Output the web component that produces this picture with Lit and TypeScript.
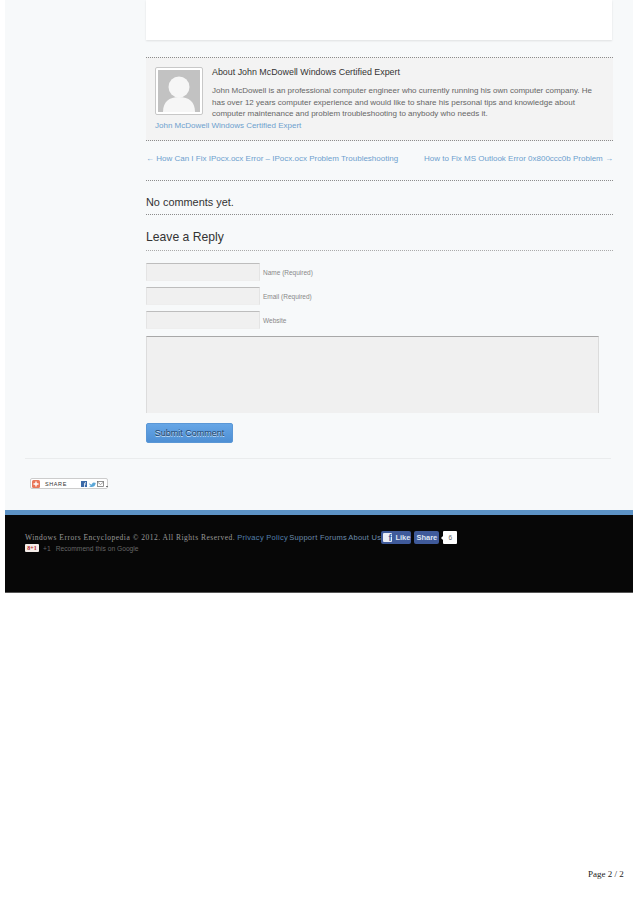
import { LitElement, html, css } from "lit";
import { customElement } from "lit/decorators.js";

@customElement("app-root")
export class AppRoot extends LitElement {
  static styles = css`
    :host { display: block; width: 638px; height: 903px; background: #fff; font-family: "Liberation Sans", Arial, sans-serif; position: relative; overflow: hidden; }
    a { color: #6d9fce; text-decoration: none; }
    .sheet { margin-left: 5px; width: 628px; height: 510px; background: #f7f9fa; box-sizing: border-box; display: flex; flex-direction: column; }
    .main { margin-left: 141px; width: 467px; display: flex; flex-direction: column; }
    .card { width: 466px; height: 40px; background: #fff; box-shadow: 0 1px 2px rgba(0,0,0,.1); }
    .about { margin-top: 17px; height: 84px; box-sizing: border-box; background: #f3f3f3; border-top: 1px dotted #8c8c8c; border-bottom: 1px dotted #8c8c8c; padding: 9px 9px 0; }
    .about-row { display: flex; }
    .avatar { width: 48px; height: 48px; box-sizing: border-box; flex: none; background: #fff; border: 1px solid #c8c8c8; border-radius: 2px; padding: 2px; display: block; }
    .avatar svg { display: block; width: 42px; height: 42px; }
    .about-text { margin-left: 9px; }
    .about h4 { margin: 0 0 7px; font-weight: 400; font-size: 8.9px; line-height: 11px; color: #333; }
    .about p { margin: 0; font-size: 8px; line-height: 11.6px; color: #666; width: 385px; }
    .author { display: block; font-size: 8px; line-height: 11px; }
    .nav { height: 40px; display: flex; justify-content: space-between; align-items: center; font-size: 8px; border-bottom: 1px dotted #8c8c8c; box-sizing: border-box; white-space: nowrap; padding-bottom: 4px; }
    .none { margin: 0; height: 34px; box-sizing: border-box; border-bottom: 1px dotted #8c8c8c; font-size: 10.9px; font-weight: 400; color: #333; padding-top: 15px; line-height: 13px; }
    .reply { margin: 0; height: 36px; box-sizing: border-box; border-bottom: 1px dotted #aaa; font-size: 12.2px; font-weight: 400; color: #333; padding-top: 15px; line-height: 15px; }
    .fields { display: flex; flex-direction: column; gap: 6px; margin-top: 12px; }
    .field { display: flex; align-items: center; height: 18px; }
    .input { width: 114px; height: 18px; box-sizing: border-box; background: #f0f0f0; border-top: 1px solid #bdbdbd; border-left: 1px solid #e4e4e4; border-right: 1px solid #e4e4e4; border-bottom: 1px solid #eee; }
    .field span { margin-left: 3px; font-size: 6.5px; color: #888; }
    .area { margin-top: 7px; width: 453px; height: 77px; box-sizing: border-box; background: #f0f0f0; border-top: 1px solid #a8a8a8; border-left: 1px solid #dcdcdc; border-right: 1px solid #dcdcdc; }
    .submit { display: block; margin-top: 10px; width: 87px; height: 20px; box-sizing: border-box; background: linear-gradient(#66a6e6, #4e8fd4); border: 1px solid #5a97d6; border-radius: 2px; color: #24446a; font: 400 9px/18px "Liberation Sans", Arial, sans-serif; padding: 0; text-shadow: 0 1px 0 #cfe3f7; }
    .rule { margin: 15px 0 0 20px; width: 586px; height: 1px; background: #eaeced; }
    .share { margin: 19px 0 0 25px; width: 78px; height: 11px; box-sizing: border-box; background: #fff; border: 1px solid #ccc; border-radius: 2px; display: flex; align-items: center; padding-left: 1px; font-size: 5.5px; letter-spacing: .6px; color: #333; }
    .share svg { display: block; flex: none; }
    .share b { font-weight: 400; margin-left: 5px; width: 31px; flex: none; }
    .footer { margin-left: 5px; width: 628px; height: 83px; box-sizing: border-box; background: #070707; border-top: 5px solid #5d93c6; border-bottom: 1px solid #555; padding: 16px 20px 0; }
    .f1 { display: flex; align-items: center; height: 13px; font: 7.5px/13px "Liberation Serif", serif; letter-spacing: .5px; color: #999; white-space: nowrap; }
    .f1 a { font-family: "Liberation Sans", sans-serif; letter-spacing: .3px; margin-left: 2px; color: #5480ae; font-size: 7.5px; }
    .f1 a + a { color: #6d8caa; margin-left: 1px; }
    .fb { height: 13px; background: #3f5a9a; border-radius: 2px; color: #dfe5f2; font: 700 7.5px/13px "Liberation Sans", sans-serif; letter-spacing: 0; display: flex; align-items: center; box-sizing: border-box; }
    .like { width: 30px; padding-left: 2px; }
    .like i { width: 9px; height: 9px; background: #e9edf5; color: #3f5a9a; border-radius: 1px; font: 700 9px/11px "Liberation Sans", sans-serif; text-align: right; margin-right: 3px; overflow: hidden; padding-right: 1px; box-sizing: border-box; }
    .sharebtn { width: 25px; justify-content: center; margin-left: 3px; }
    .count { margin-left: 4px; width: 14px; height: 13px; background: #fff; border-radius: 1px; color: #666; font: 6.5px/13px "Liberation Sans", sans-serif; text-align: center; letter-spacing: 0; position: relative; }
    .count::before { content: ""; position: absolute; left: -2px; top: 5px; border: 2px solid transparent; border-left: 0; border-right-color: #fff; }
    .f2 { display: flex; align-items: center; height: 8px; font-size: 6.7px; color: #666; }
    .g { width: 14px; height: 8px; background: #f4ece8; border-radius: 1px; color: #b3261e; font: 700 6px/8px "Liberation Serif", serif; text-align: center; margin-right: 4px; }
    .f2 span { margin-right: 5px; }
    .page { position: absolute; left: 588px; top: 869px; font: 9px/11px "Liberation Serif", serif; color: #222; }
  `;

  render() {
    return html`
      <div class="sheet">
        <div class="main">
          <div class="card"></div>
          <div class="about">
            <div class="about-row">
              <div class="avatar">
                <svg viewBox="0 0 42 42">
                  <rect width="42" height="42" fill="#c2c2c2"/>
                  <circle cx="21" cy="17" r="10.5" fill="#f6f6f6"/>
                  <path d="M5 42c0-10 6-15 16-15s16 5 16 15z" fill="#f6f6f6"/>
                </svg>
              </div>
              <div class="about-text">
                <h4>About John McDowell Windows Certified Expert</h4>
                <p>John McDowell is an professional computer engineer who currently running his own computer company. He has over 12 years computer experience and would like to share his personal tips and knowledge about computer maintenance and problem troubleshooting to anybody who needs it.</p>
              </div>
            </div>
            <a class="author" href="#">John McDowell Windows Certified Expert</a>
          </div>
          <div class="nav">
            <a href="#">← How Can I Fix IPocx.ocx Error – IPocx.ocx Problem Troubleshooting</a>
            <a href="#">How to Fix MS Outlook Error 0x800ccc0b Problem →</a>
          </div>
          <h3 class="none">No comments yet.</h3>
          <h3 class="reply">Leave a Reply</h3>
          <div class="fields">
            <div class="field"><div class="input"></div><span>Name (Required)</span></div>
            <div class="field"><div class="input"></div><span>Email (Required)</span></div>
            <div class="field"><div class="input"></div><span>Website</span></div>
          </div>
          <div class="area"></div>
          <button class="submit">Submit Comment</button>
        </div>
        <div class="rule"></div>
        <div class="share">
          <svg width="8" height="8" viewBox="0 0 8 8"><rect width="8" height="8" rx="1.5" fill="#e8775a"/><path d="M4 1.5v5M1.5 4h5" stroke="#fff" stroke-width="1.4"/></svg>
          <b>SHARE</b>
          <svg width="36" height="8" viewBox="0 0 36 8">
            <rect x="5" y="1" width="6" height="6" fill="#3b6aa8"/><path d="M8.500 7V4h1.500M8.500 4c0-1 .5-1.500 1.500-1.500" stroke="#fff" fill="none" stroke-width=".8"/>
            <path d="M13 3c1 1 2 1.500 3 1.500 0-1.500 1.500-2.500 3-1.500l1-.3-.5 1c0 2-2 3.300-4 3.300-1 0-2-.3-2.500-.8 1 0 1.500-.2 2-.5-1 0-1.500-.7-2-3z" fill="#5aa7d8"/>
            <rect x="21.500" y="1.500" width="6" height="5" fill="#fff" stroke="#666" stroke-width=".7"/><path d="M21.500 2l3 2.500 3-2.500" stroke="#666" fill="none" stroke-width=".6"/>
            <path d="M30 6.500h2" stroke="#555" stroke-width=".8"/>
          </svg>
        </div>
      </div>
      <div class="footer">
        <div class="f1">
          Windows Errors Encyclopedia © 2012. All Rights Reserved.
          <a href="#">Privacy Policy</a><a href="#">Support Forums</a><a href="#">About Us</a>
          <div class="fb like"><i>f</i>Like</div>
          <div class="fb sharebtn">Share</div>
          <div class="count">6</div>
        </div>
        <div class="f2"><div class="g">8+1</div><span>+1</span>Recommend this on Google</div>
      </div>
      <div class="page">Page 2 / 2</div>
    `;
  }
}
